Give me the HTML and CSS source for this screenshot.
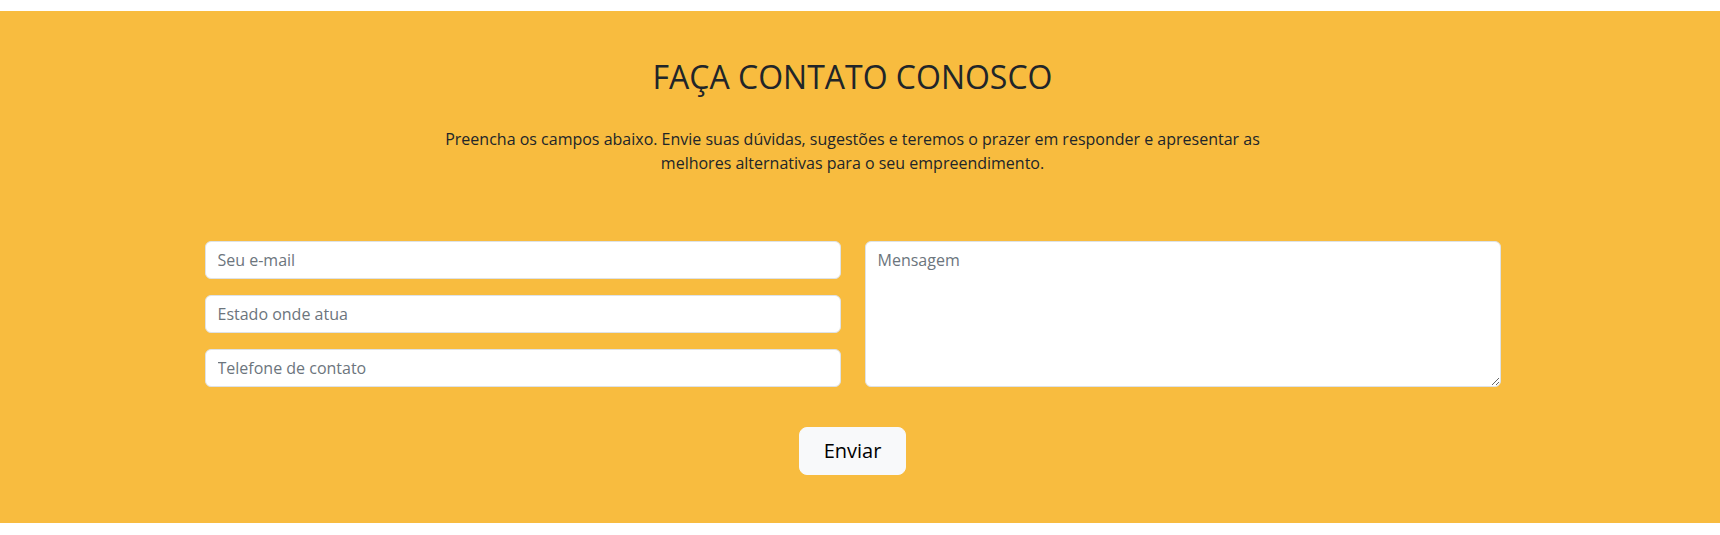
FILE: index.html
```html
<!DOCTYPE html>
<html lang="pt-BR">
<head>
<meta charset="utf-8">
<title>Faça contato conosco</title>
<link rel="stylesheet" href="styles.css">
</head>
<body>
<div class="page">
  <section class="contact">
    <div class="container">
      <h2 class="title">FAÇA CONTATO CONOSCO</h2>
      <p class="lead">Preencha os campos abaixo. Envie suas dúvidas, sugestões e teremos o prazer em responder e apresentar as melhores alternativas para o seu empreendimento.</p>
      <form class="form">
        <div class="fields">
          <div class="col">
            <input class="control" type="email" placeholder="Seu e-mail">
            <input class="control" type="text" placeholder="Estado onde atua">
            <input class="control" type="text" placeholder="Telefone de contato">
          </div>
          <div class="col">
            <textarea class="control area" placeholder="Mensagem"></textarea>
          </div>
        </div>
        <div class="actions">
          <button class="btn" type="button">Enviar</button>
        </div>
      </form>
    </div>
  </section>
</div>
</body>
</html>
```

FILE: styles.css
```css
* { box-sizing: border-box; }
html, body { margin: 0; padding: 0; }
body {
  font-family: "Open Sans", "Liberation Sans", sans-serif;
  color: #212529;
  background: #fff;
}
.page {
  padding: 11px 0 12px;
}
.contact {
  background: #f8bc3f;
  padding: 47px 15px 48px 0;
}
.container {
  max-width: 1296px;
  margin: 0 auto;
}
.title {
  margin: 0;
  text-align: center;
  font-size: 32px;
  font-weight: 400;
  line-height: 38.4px;
  color: #212529;
}
.lead {
  margin: 31px auto 0;
  max-width: 856px;
  text-align: center;
  font-size: 16px;
  line-height: 24px;
  color: #212529;
}
.form {
  margin-top: 66px;
}
.fields {
  display: grid;
  grid-template-columns: 1fr 1fr;
  gap: 24px;
}
.col {
  display: flex;
  flex-direction: column;
  gap: 16px;
}
.control {
  display: block;
  width: 100%;
  height: 38px;
  padding: 6px 12px;
  font-family: "Open Sans", "Liberation Sans", sans-serif;
  font-size: 16px;
  line-height: 24px;
  color: #212529;
  background: #fff;
  border: 1px solid #dee2e6;
  border-radius: 6px;
}
.control::placeholder { color: #6c757d; opacity: 1; }
.area {
  height: 146px;
  resize: vertical;
}
.actions {
  display: flex;
  justify-content: center;
  margin-top: 40px;
}
.btn {
  font-family: "Open Sans", "Liberation Sans", sans-serif;
  font-size: 20px;
  line-height: 30px;
  padding: 8px 24px;
  color: #000;
  background: #f8f9fa;
  border: 1px solid #f8f9fa;
  border-radius: 8px;
  cursor: pointer;
}
```
